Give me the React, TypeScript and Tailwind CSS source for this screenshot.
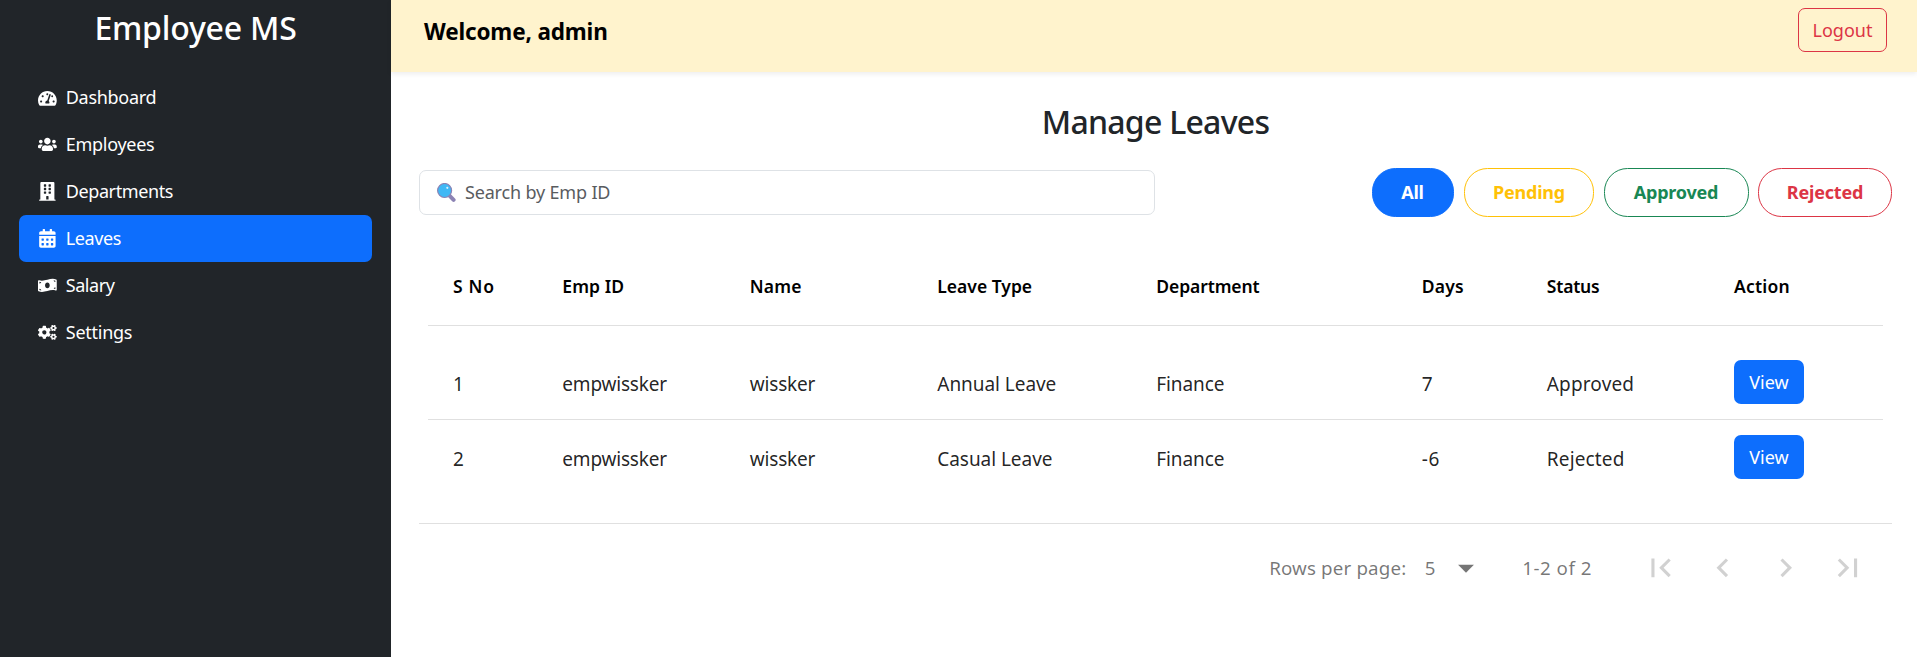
import type { ReactNode } from 'react';
import {
  FaTachometerAlt,
  FaUsers,
  FaBuilding,
  FaCalendarAlt,
  FaMoneyBillWave,
  FaCogs,
} from 'react-icons/fa';

const navItems = [
  { label: 'Dashboard', icon: FaTachometerAlt, tracking: 'tracking-[-0.3px]' },
  { label: 'Employees', icon: FaUsers, tracking: 'tracking-[-0.28px]' },
  { label: 'Departments', icon: FaBuilding, tracking: 'tracking-[-0.4px]' },
  { label: 'Leaves', icon: FaCalendarAlt, tracking: 'tracking-[-0.4px]', active: true },
  { label: 'Salary', icon: FaMoneyBillWave, tracking: 'tracking-[-0.45px]' },
  { label: 'Settings', icon: FaCogs, tracking: 'tracking-[-0.25px]' },
];

const filters = [
  { label: 'All', style: 'mr-px w-[82px] border-[#0d6efd] bg-[#0d6efd] text-white' },
  { label: 'Pending', style: 'w-[130px] border-[#ffc107] text-[#ffc107]' },
  { label: 'Approved', style: 'w-[145px] border-[#198754] text-[#198754]' },
  { label: 'Rejected', style: 'w-[134px] border-[#dc3545] text-[#dc3545]' },
];

const columns = [
  { label: 'S No', tracking: 'tracking-[0.7px]' },
  { label: 'Emp ID', tracking: 'tracking-[0.1px]' },
  { label: 'Name', tracking: 'tracking-[0.2px]' },
  { label: 'Leave Type', tracking: '' },
  { label: 'Department', tracking: 'tracking-[-0.1px]' },
  { label: 'Days', tracking: 'tracking-[0.2px]' },
  { label: 'Status', tracking: 'tracking-[-0.2px]' },
  { label: 'Action', tracking: 'tracking-[0.2px]' },
];

const leaves = [
  { sno: 1, empId: 'empwissker', name: 'wissker', type: 'Annual Leave', department: 'Finance', days: 7, status: 'Approved' },
  { sno: 2, empId: 'empwissker', name: 'wissker', type: 'Casual Leave', department: 'Finance', days: -6, status: 'Rejected' },
];

const tableGrid =
  'grid grid-cols-[109.3px_187.5px_187.5px_219px_265.5px_125px_187.2px_1fr] items-center pl-[25px]';

function SearchGlyph() {
  return (
    <svg viewBox="0 0 19 19" className="h-[19px] w-[19px] shrink-0">
      <path d="M12 12.2 L16.6 16.8" stroke="#8c83b4" strokeWidth="4" strokeLinecap="round" />
      <circle cx="7.6" cy="7.5" r="7" fill="#3fb8f5" stroke="#8c83b4" strokeWidth="1.2" />
      <circle cx="10.3" cy="4.8" r="1.1" fill="#d9f1fd" />
    </svg>
  );
}

function PageButton({ children, className = '' }: { children: ReactNode; className?: string }) {
  return (
    <button className={`flex h-[47px] w-[62.5px] items-center justify-center ${className}`}>
      <svg viewBox="0 0 24 24" className="h-[37.5px] w-[37.5px] fill-black/18">
        {children}
      </svg>
    </button>
  );
}

export default function App() {
  return (
    <div className="flex h-[657px] w-full overflow-hidden bg-white font-['Noto_Sans','Open_Sans',sans-serif] text-[#212529]">
      <aside className="w-[391px] shrink-0 bg-[#212529] text-white">
        <h1 className="h-[74.45px] text-center text-[32px] leading-[56px] font-[550] tracking-[-0.2px]">
          Employee MS
        </h1>
        <nav className="px-[19px]">
          {navItems.map(({ label, icon: Icon, tracking, active }) => (
            <a
              key={label}
              className={`flex h-[46.88px] items-center gap-[9px] rounded-[7px] pl-[19px] text-[18px] ${tracking} ${active ? 'bg-[#0d6efd]' : ''}`}
            >
              <Icon className="size-[18.75px]" />
              <span className="leading-[47px]">{label}</span>
            </a>
          ))}
        </nav>
      </aside>

      <main className="flex min-w-0 flex-1 flex-col">
        <header className="flex h-[72px] shrink-0 items-start justify-between bg-[#fff3cd] pr-[30px] pl-[33px] shadow-[0_2px_5px_rgba(0,0,0,0.075)]">
          <h2 className="text-[22.5px] leading-[63px] font-bold tracking-[-0.15px] text-black">Welcome, admin</h2>
          <button className="mt-[8px] flex h-[44px] w-[89px] justify-center rounded-[7px] border border-[#dc3545] text-[18px] leading-[43px] text-[#dc3545]">
            Logout
          </button>
        </header>

        <section className="pr-[25px] pl-[28px]">
          <h3 className="mt-[28px] h-[68px] text-center text-[32px] leading-[44px] font-[550] tracking-[-0.75px]">
            Manage Leaves
          </h3>
          <div className="flex h-[49px] items-center justify-between">
            <div className="flex h-[45px] w-[736px] items-center gap-[9px] rounded-[7px] border border-[#dee2e6] pl-[17px] text-[18px] tracking-[-0.17px] text-[#595c5f]">
              <SearchGlyph />
              <span className="leading-[43px]">Search by Emp ID</span>
            </div>
            <div className="flex gap-[9.5px]">
              {filters.map(({ label, style }) => (
                <button
                  key={label}
                  className={`flex h-[49px] justify-center rounded-[23.5px] border text-[18px] leading-[47px] font-bold tracking-[-0.2px] ${style}`}
                >
                  {label}
                </button>
              ))}
            </div>
          </div>

          <div className="mt-[38px] px-[9px]">
            <div className={`${tableGrid} h-[71px] border-b border-[#e0e0e0] text-[17.5px] leading-[24px] font-semibold text-black`}>
              {columns.map(({ label, tracking }) => (
                <span key={label} className={`-mt-[8px] ${tracking}`}>
                  {label}
                </span>
              ))}
            </div>
            <div className="h-[197px] pt-[19px]">
              {leaves.map((row) => (
                <div
                  key={row.sno}
                  className={`${tableGrid} h-[75px] border-b border-[#e0e0e0] text-[19px] leading-[26px] text-black/87 last:h-[74px] last:border-b-0`}
                >
                  <span className="pt-[3px]">{row.sno}</span>
                  <span className="pt-[3px] tracking-[-0.2px]">{row.empId}</span>
                  <span className="pt-[3px] tracking-[-0.2px]">{row.name}</span>
                  <span className="pt-[3px] tracking-[-0.05px]">{row.type}</span>
                  <span className="pt-[3px] tracking-[-0.1px]">{row.department}</span>
                  <span className="pt-[3px] tracking-[0.6px]">{row.days}</span>
                  <span className="pt-[3px] tracking-[0.15px]">{row.status}</span>
                  <button className="flex h-[44.5px] w-[70px] justify-center rounded-[7px] bg-[#0d6efd] text-[18px] leading-[44px] text-white">
                    View
                  </button>
                </div>
              ))}
            </div>
          </div>

          <footer className="flex h-[88px] items-center justify-end border-t border-[#e0e0e0] pr-[13px] text-[18.75px] leading-[26px] tracking-[0.15px] text-black/54">
            <span>Rows per page:</span>
            <span className="ml-[18.5px]">5</span>
            <svg viewBox="0 0 24 24" className="ml-[11px] h-[38px] w-[38px] fill-black/54">
              <path d="M7 10l5 5 5-5z" />
            </svg>
            <span className="ml-[37.5px] tracking-[0.5px]">1-2 of 2</span>
            <PageButton className="ml-[37px]">
              <path d="M18.41 16.59L13.82 12l4.59-4.59L17 6l-6 6 6 6zM6 6h2v12H6z" />
            </PageButton>
            <PageButton>
              <path d="M15.41 7.41L14 6l-6 6 6 6 1.41-1.41L10.83 12z" />
            </PageButton>
            <PageButton>
              <path d="M10 6L8.59 7.41 13.17 12l-4.58 4.59L10 18l6-6z" />
            </PageButton>
            <PageButton>
              <path d="M5.59 7.41L10.18 12l-4.59 4.59L7 18l6-6-6-6zM16 6h2v12h-2z" />
            </PageButton>
          </footer>
        </section>
      </main>
    </div>
  );
}
